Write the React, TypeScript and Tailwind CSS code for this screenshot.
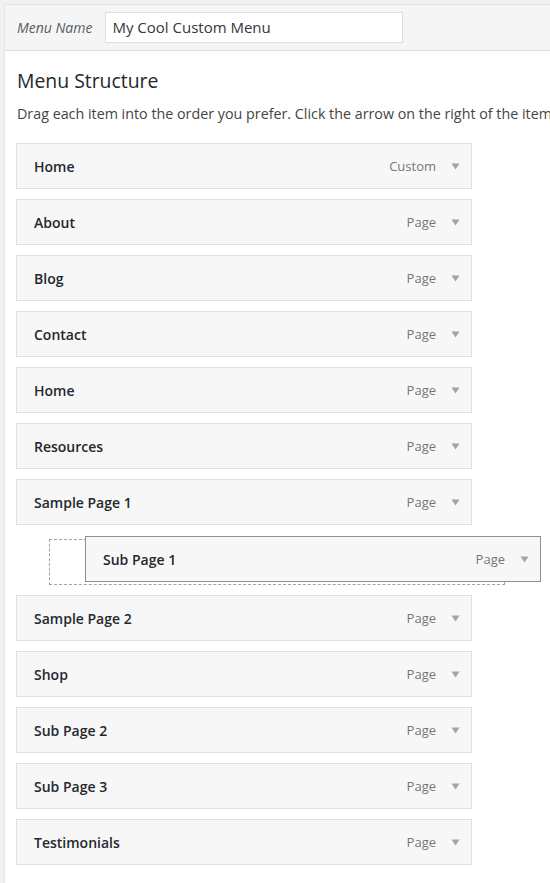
import React from "react";

const items = [
  { title: "Home", type: "Custom" },
  { title: "About", type: "Page" },
  { title: "Blog", type: "Page" },
  { title: "Contact", type: "Page" },
  { title: "Home", type: "Page" },
  { title: "Resources", type: "Page" },
  { title: "Sample Page 1", type: "Page" },
];

const after = [
  { title: "Sample Page 2", type: "Page" },
  { title: "Shop", type: "Page" },
  { title: "Sub Page 2", type: "Page" },
  { title: "Sub Page 3", type: "Page" },
  { title: "Testimonials", type: "Page" },
];

function Arrow() {
  return (
    <svg width="9" height="7" viewBox="0 0 9 7" className="ml-[15px]">
      <path d="M0.5 0.5 L8.5 0.5 L4.5 6.5 Z" fill="#a0a5aa" />
    </svg>
  );
}

function MenuItem({ title, type, dragging }: { title: string; type: string; dragging?: boolean }) {
  return (
    <div
      className={`flex items-center h-[46px] w-[456px] pl-[17px] pr-[11px] bg-[#f7f7f7] border ${
        dragging ? "border-[#8f8f8f]" : "border-[#dfdfdf]"
      }`}
    >
      <span className="flex-1 text-[14px] font-semibold text-[#23282d]">{title}</span>
      <span className="text-[13px] text-[#72777c]">{type}</span>
      <Arrow />
    </div>
  );
}

export default function App() {
  return (
    <div className="min-h-[883px] bg-[#f1f1f1] pl-[4px] pt-[4px] overflow-hidden font-['Open_Sans',sans-serif]">
      <div className="w-[600px] min-h-[879px] bg-white border-l border-t border-[#e5e5e5]">
        <div className="h-[46px] bg-[#f5f5f5] border-b border-[#dfdfdf] flex items-center pl-[12px]">
          <span className="italic text-[14px] text-[#555d66]">Menu Name</span>
          <div className="ml-[13px] w-[298px] h-[31px] bg-white border border-[#ddd] flex items-center pl-[6px] text-[15px] text-[#32373c]">
            My Cool Custom Menu
          </div>
        </div>
        <div className="pl-[12px] pt-[16px]">
          <h2 className="text-[19.4px] leading-[28px] text-[#23282d]">Menu Structure</h2>
          <p className="mt-[8px] text-[14.3px] text-[#444] whitespace-nowrap">
            Drag each item into the order you prefer. Click the arrow on the right of the item to reveal additional configuration options.
          </p>
          <div className="mt-[19px] flex flex-col gap-[10px] ml-[-1px]">
            {items.map((it, i) => (
              <MenuItem key={i} title={it.title} type={it.type} />
            ))}
            <div className="relative h-[46px] mt-[4px]">
              <div className="ml-[33px] w-[456px] h-[46px] border border-dashed border-[#a0a5aa]" />
              <div className="absolute left-[69px] top-[-3px]">
                <MenuItem title="Sub Page 1" type="Page" dragging />
              </div>
            </div>
            {after.map((it, i) => (
              <MenuItem key={i} title={it.title} type={it.type} />
            ))}
          </div>
        </div>
      </div>
    </div>
  );
}
